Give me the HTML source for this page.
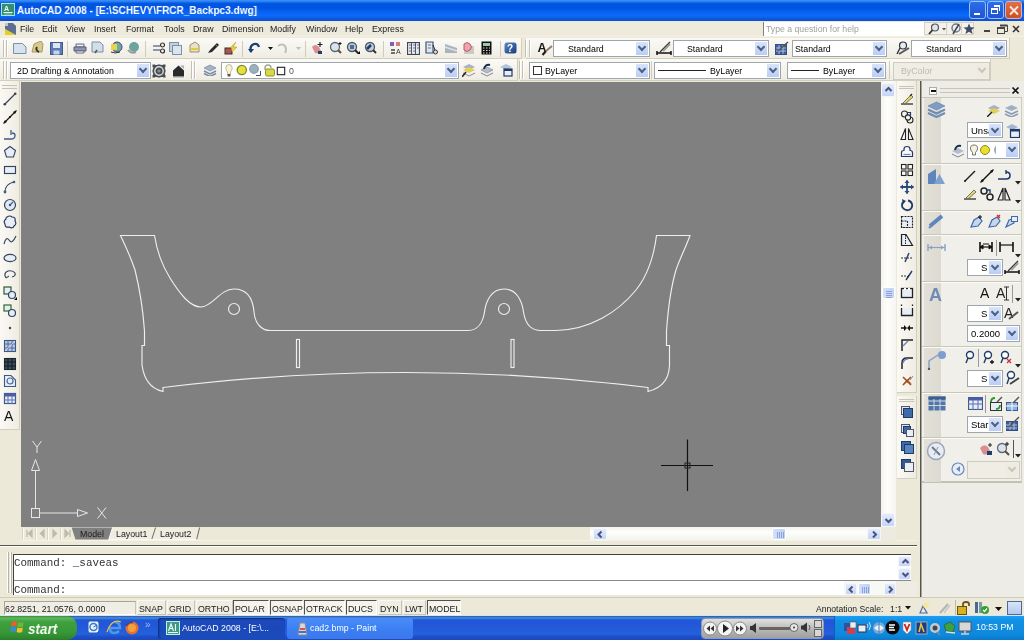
<!DOCTYPE html>
<html><head><meta charset="utf-8"><style>
*{margin:0;padding:0;box-sizing:border-box}
html,body{width:1024px;height:640px;overflow:hidden;background:#ECE9D8;font-family:"Liberation Sans",sans-serif;font-size:9px;color:#1A1A1A}
body{position:relative}
div,span,svg{position:absolute}
svg{will-change:transform}
.t{white-space:nowrap;line-height:1;will-change:transform}
.cb{background:#fff;border:1px solid #9DA5AD}
.dd{position:absolute;top:1px;bottom:1px;right:1px;width:12px;background:linear-gradient(#D9E4FB,#BACDF5)}
.dd:after{content:"";position:absolute;left:3px;top:2px;width:4px;height:4px;border-right:2px solid #4D6185;border-bottom:2px solid #4D6185;transform:rotate(45deg)}
.ddx:after{border-color:#C8C6BC}
.tb{background:linear-gradient(#FAF9F4,#EEEBE0);}
.mi{font-size:9.5px;top:24px}
</style></head><body>
<div style="left:0px;top:0px;width:1024px;height:21px;background:linear-gradient(#3D95FC 0px,#2A7CF2 1.5px,#0058DE 3.5px,#0053E2 8px,#0862F4 12px,#0A6AFA 16px,#085EE8 18px,#1A4EBC 20px,#1A4EBC 21px)"></div>
<svg style="left:1px;top:3px;" width="14" height="13" viewBox="0 0 14 13"><rect x="0.5" y="0.5" width="13" height="12" fill="#3A8C6E" stroke="#9EE8DC"/><text x="3" y="8" font-size="7" fill="#E8FFF8" font-family="Liberation Sans" font-weight="bold">A</text><path d="M2.5 9.5H11.5" stroke="#E8FFF8"/><rect x="3" y="10.5" width="8" height="1" fill="#7AC8B0"/></svg>
<div class="t" style="left:17px;top:5px;font-size:11px;transform:scaleX(0.913);transform-origin:0 0;font-weight:bold;color:#fff">AutoCAD 2008 - [E:\SCHEVY\FRCR_Backpc3.dwg]</div>
<div style="left:969px;top:1px;width:17px;height:18px;border:1px solid #9CC0FA;border-radius:3px;background:linear-gradient(#2E6CEA,#1E54D4)"><div style="left:4px;top:11px;width:6px;height:2px;background:#fff"></div></div>
<div style="left:987px;top:1px;width:17px;height:18px;border:1px solid #9CC0FA;border-radius:3px;background:linear-gradient(#2E6CEA,#1E54D4)"><div style="left:3px;top:6px;width:7px;height:6px;border:1px solid #fff;border-top-width:2px"></div><div style="left:6px;top:3px;width:6px;height:6px;border-top:2px solid #fff;border-right:1px solid #fff"></div></div>
<div style="left:1005px;top:1px;width:17px;height:18px;border:1px solid #E0B0B8;border-radius:3px;background:linear-gradient(#E07048,#CC5028)"><svg style="left:3px;top:3px" width="10" height="11"><path d="M1 1.5L9 9.5M9 1.5L1 9.5" stroke="#FCE8E0" stroke-width="1.8"/></svg></div>
<div style="left:0px;top:21px;width:1024px;height:17px;background:linear-gradient(#EEEBDD,#EDEADC 80%,#F6F4EA)"></div>
<div style="left:0px;top:21px;width:1024px;height:1px;background:#DCEBF8"></div>
<svg style="left:4px;top:22px;" width="13" height="14" viewBox="0 0 13 14"><path d="M1 7L12 13H1Z" fill="#E9CF1C"/><path d="M1 1H9L12 4V13L1 7Z" fill="#5C6E92"/><path d="M1 1h3v3h-3z" fill="#fff" opacity=".6"/></svg>
<div class="t" style="left:20px;top:25px;font-size:8.8px;">File</div>
<div class="t" style="left:42px;top:25px;font-size:8.8px;">Edit</div>
<div class="t" style="left:66px;top:25px;font-size:8.8px;">View</div>
<div class="t" style="left:94px;top:25px;font-size:8.8px;">Insert</div>
<div class="t" style="left:126px;top:25px;font-size:8.8px;">Format</div>
<div class="t" style="left:164px;top:25px;font-size:8.8px;">Tools</div>
<div class="t" style="left:193px;top:25px;font-size:8.8px;">Draw</div>
<div class="t" style="left:222px;top:25px;font-size:8.8px;">Dimension</div>
<div class="t" style="left:270px;top:25px;font-size:8.8px;">Modify</div>
<div class="t" style="left:306px;top:25px;font-size:8.8px;">Window</div>
<div class="t" style="left:345px;top:25px;font-size:8.8px;">Help</div>
<div class="t" style="left:372px;top:25px;font-size:8.8px;">Express</div>
<div style="left:763px;top:22px;width:162px;height:14px;background:#fff;border-left:1px solid #808080"></div>
<div class="t" style="left:766px;top:25px;font-size:8.7px;color:#A0A0A0">Type a question for help</div>
<div style="left:924px;top:22px;width:50px;height:13px;background:#F3F1E9;border:1px solid #D4D0C4"></div>
<div style="left:946px;top:23px;width:1px;height:11px;background:#D4D0C4"></div>
<div style="left:961px;top:23px;width:1px;height:11px;background:#D4D0C4"></div>
<svg style="left:927px;top:23px;" width="14" height="12" viewBox="0 0 14 12"><circle cx="8" cy="4.5" r="3.5" fill="#DDE6F0" stroke="#555" stroke-width="1.2"/><path d="M5.5 7L2 11" stroke="#333" stroke-width="1.8"/></svg>
<svg style="left:942px;top:28px;" width="5" height="3" viewBox="0 0 5 3"><path d="M0 0H4L2 2.5Z" fill="#555"/></svg>
<svg style="left:950px;top:23px;" width="12" height="12" viewBox="0 0 12 12"><circle cx="6" cy="5" r="4" fill="none" stroke="#6D7A8C" stroke-width="1.5"/><path d="M3 11L9 1" stroke="#445" stroke-width="1.5"/></svg>
<svg style="left:963px;top:23px;" width="12" height="12" viewBox="0 0 12 12"><path d="M6 0.5L7.6 4.3L11.5 4.5L8.5 7L9.6 11L6 8.7L2.4 11L3.5 7L0.5 4.5L4.4 4.3Z" fill="#3E4C68"/></svg>
<div style="left:984px;top:30px;width:6px;height:2px;background:#444"></div>
<svg style="left:997px;top:24px;" width="11" height="10" viewBox="0 0 11 10"><rect x="0.5" y="3.5" width="7" height="6" fill="none" stroke="#444"/><path d="M0.5 4H7.5" stroke="#444" stroke-width="2"/><path d="M3 1.5H10.5V7.5H8" fill="none" stroke="#444"/><path d="M3 1.5H10.5" stroke="#444" stroke-width="2"/></svg>
<svg style="left:1012px;top:25px;" width="8" height="8" viewBox="0 0 8 8"><path d="M1 1L7 7M7 1L1 7" stroke="#333" stroke-width="1.6"/></svg>
<div style="left:0px;top:37px;width:1024px;height:44px;background:#ECE9D8"></div>
<div style="left:0px;top:38px;width:1010px;height:21px;background:linear-gradient(#FBFAF6,#EFECE2);border-bottom:1px solid #D2CEC0;border-right:1px solid #D2CEC0"></div>
<div style="left:0px;top:59px;width:991px;height:22px;background:linear-gradient(#FBFAF6,#EFECE2);border-bottom:1px solid #D2CEC0;border-right:1px solid #D2CEC0"></div>
<div style="left:21px;top:82px;width:860px;height:445px;background:#808080"></div>
<div style="left:3px;top:40px;width:2px;height:17px;border-left:1px solid #C5C1B0;border-right:1px solid #fff"></div>
<div style="left:6px;top:40px;width:2px;height:17px;border-left:1px solid #C5C1B0;border-right:1px solid #fff"></div>
<svg style="left:13px;top:42px;" width="14" height="12" viewBox="0 0 14 12"><path d="M0.5 1.5H9.5L13 5V11.5H0.5Z" fill="#D6E3EE" stroke="#7C8FA3"/></svg>
<svg style="left:31px;top:41px;" width="14" height="13" viewBox="0 0 14 13"><path d="M1 11L3 3L10 0L12 3L11 11Z" fill="#D9C98C" stroke="#A89A5E"/><path d="M6 6Q4 9 8 11" stroke="#333" stroke-width="2" fill="none"/></svg>
<svg style="left:50px;top:42px;" width="13" height="13" viewBox="0 0 13 13"><rect x="0.5" y="0.5" width="12" height="12" fill="#5B7BB5" stroke="#3E5A90"/><rect x="3" y="1" width="7" height="5" fill="#DDE6F4"/><rect x="3.5" y="8.5" width="6" height="4" fill="#C8D4EA"/></svg>
<div style="left:67px;top:41px;width:1px;height:16px;background:#D0CCBC"></div>
<svg style="left:73px;top:41px;" width="14" height="13" viewBox="0 0 14 13"><path d="M3 3H11V6H3Z" fill="#EDEFF6" stroke="#667"/><path d="M1 6H13V10H1Z" fill="#8E96B8" stroke="#555A7A"/><path d="M3 10H11V12H3Z" fill="#fff" stroke="#667"/></svg>
<svg style="left:91px;top:41px;" width="13" height="14" viewBox="0 0 13 14"><path d="M1 1H9L12 4V11H1Z" fill="#D2DEEA" stroke="#7E8EA2"/><path d="M4 12L6 9" stroke="#555" stroke-width="1.5"/></svg>
<svg style="left:109px;top:41px;" width="14" height="14" viewBox="0 0 14 14"><circle cx="8" cy="6" r="5" fill="#6FA8A8" stroke="#446"/><rect x="2" y="3" width="6" height="6" fill="#E8D44A"/><path d="M2 11Q6 13 11 11" stroke="#333" fill="none"/></svg>
<svg style="left:127px;top:41px;" width="13" height="13" viewBox="0 0 13 13"><circle cx="7" cy="6" r="5" fill="#6BA59E"/><path d="M1 9Q4 13 9 11" stroke="#999" stroke-width="2" fill="none"/></svg>
<div style="left:145px;top:41px;width:1px;height:16px;background:#D0CCBC"></div>
<svg style="left:152px;top:42px;" width="14" height="12" viewBox="0 0 14 12"><path d="M1 4H8" stroke="#6C7896" stroke-width="1.5"/><path d="M1 8H8" stroke="#6C7896" stroke-width="1.5"/><circle cx="10.5" cy="3" r="2" fill="none" stroke="#333" stroke-width="1.2"/><circle cx="10.5" cy="9" r="2" fill="none" stroke="#333" stroke-width="1.2"/></svg>
<svg style="left:169px;top:42px;" width="14" height="13" viewBox="0 0 14 13"><rect x="0.5" y="0.5" width="9" height="9" fill="#C2D0E0" stroke="#7E90A6"/><rect x="3.5" y="3.5" width="9" height="9" fill="#DAE4EF" stroke="#7E90A6"/></svg>
<svg style="left:188px;top:41px;" width="13" height="14" viewBox="0 0 13 14"><path d="M2 4L7 1L11 4V11H2Z" fill="#E8E2C8" stroke="#9A9068"/><path d="M3 8H10" stroke="#E0CC40" stroke-width="2"/></svg>
<svg style="left:207px;top:42px;" width="13" height="12" viewBox="0 0 13 12"><path d="M1 11L3 8L10 1L12 3L5 10Z" fill="#2A2A2A"/><path d="M8 2L11 5" stroke="#888"/></svg>
<svg style="left:224px;top:41px;" width="14" height="14" viewBox="0 0 14 14"><rect x="1" y="7" width="7" height="6" fill="#B45050" stroke="#333"/><path d="M7 6L12 1L9 6H13L8 11" fill="#E8D030" stroke="#C0A020" stroke-width="0.6"/></svg>
<div style="left:242px;top:41px;width:1px;height:16px;background:#D0CCBC"></div>
<svg style="left:248px;top:42px;" width="12" height="12" viewBox="0 0 12 12"><path d="M3 10Q1 4 6 2Q10 1 11 5" stroke="#1C3C7C" stroke-width="2.2" fill="none"/><path d="M0 7L3 11L6 7Z" fill="#1C3C7C"/></svg>
<svg style="left:268px;top:47px;" width="5" height="3" viewBox="0 0 5 3"><path d="M0 0H5L2.5 3Z" fill="#111"/></svg>
<svg style="left:276px;top:42px;" width="12" height="13" viewBox="0 0 12 13"><path d="M2 4Q6 1 9 4Q11 8 9 11" stroke="#BFBFBF" stroke-width="2" fill="none"/></svg>
<svg style="left:296px;top:47px;" width="5" height="3" viewBox="0 0 5 3"><path d="M0 0H5L2.5 3Z" fill="#BDBDBD"/></svg>
<div style="left:305px;top:41px;width:1px;height:16px;background:#D0CCBC"></div>
<svg style="left:310px;top:41px;" width="14" height="14" viewBox="0 0 14 14"><path d="M2 6Q5 2 9 6L11 10Q9 13 5 12Z" fill="#D88F8F"/><rect x="8" y="10" width="4" height="3" fill="#1F3F6A"/><path d="M10 1V6M7.5 3.5H12.5" stroke="#222" stroke-width="1.2"/></svg>
<svg style="left:329px;top:41px;" width="14" height="14" viewBox="0 0 14 14"><circle cx="6" cy="6" r="4.5" fill="#DDE3EA" stroke="#5C6A78" stroke-width="1.3"/><path d="M9 9L12 12" stroke="#5A4A3A" stroke-width="2"/><path d="M11 1V4M9.5 2.5H12.5" stroke="#111"/></svg>
<svg style="left:346px;top:41px;" width="14" height="14" viewBox="0 0 14 14"><circle cx="6" cy="6" r="4.5" fill="#C4CCD8" stroke="#4C5A68" stroke-width="1.3"/><rect x="4" y="4" width="4" height="4" fill="#4A6A9A"/><path d="M9 9L12 12" stroke="#222" stroke-width="2"/><path d="M11 13L14 13L14 10Z" fill="#000"/></svg>
<svg style="left:364px;top:41px;" width="14" height="14" viewBox="0 0 14 14"><circle cx="6" cy="6" r="4.5" fill="#C4CCD8" stroke="#4C5A68" stroke-width="1.3"/><path d="M3 8L7 4" stroke="#1E3A6E" stroke-width="2.5"/><path d="M9 9L12 12" stroke="#333" stroke-width="2"/></svg>
<div style="left:383px;top:41px;width:1px;height:16px;background:#D0CCBC"></div>
<svg style="left:389px;top:41px;" width="14" height="14" viewBox="0 0 14 14"><rect x="1" y="1" width="4" height="4" fill="#8060B0"/><rect x="7" y="1" width="4" height="4" fill="#D08080"/><path d="M2 9H6M2 12H6" stroke="#444" stroke-width="1.4"/><text x="7" y="13" font-size="7" fill="#333" font-family="Liberation Sans">A</text></svg>
<svg style="left:407px;top:42px;" width="13" height="13" viewBox="0 0 13 13"><rect x="0.5" y="0.5" width="12" height="12" fill="#E4EAF0" stroke="#3C4A58" stroke-width="1.2"/><path d="M4.5 1V12M8.5 1V12" stroke="#556"/><path d="M2 3H4M6 3H8M10 3H12M2 6H4M6 6H8M10 6H12M2 9H4M6 9H8" stroke="#556" stroke-width="0.8"/></svg>
<svg style="left:425px;top:41px;" width="13" height="14" viewBox="0 0 13 14"><path d="M1 1H8V12H1Z" fill="#DDE5EE" stroke="#3C5478" stroke-width="1.2"/><path d="M3 4H6M3 7H6" stroke="#778"/><circle cx="10.5" cy="11" r="2" fill="#ddd" stroke="#333"/><path d="M8 4L10 9" stroke="#222"/></svg>
<svg style="left:444px;top:42px;" width="14" height="12" viewBox="0 0 14 12"><path d="M1 2L13 6V11H1Z" fill="#A9B4BA"/><path d="M1 5L13 9" stroke="#DDE" stroke-width="1.5"/></svg>
<svg style="left:462px;top:41px;" width="13" height="14" viewBox="0 0 13 14"><rect x="2" y="5" width="10" height="8" fill="#C9C9C9"/><path d="M2 3Q5 0 8 3Q11 6 8 9Q5 12 2 9Z" fill="#E6A6B4" stroke="#C55"/></svg>
<svg style="left:481px;top:41px;" width="11" height="14" viewBox="0 0 11 14"><rect x="0.5" y="0.5" width="10" height="13" fill="#111" /><rect x="2" y="2" width="7" height="3" fill="#9CA"/><path d="M2 7H3.5M5 7H6.5M8 7H9M2 9.5H3.5M5 9.5H6.5M8 9.5H9M2 12H3.5M5 12H6.5M8 12H9" stroke="#ddd"/></svg>
<div style="left:500px;top:41px;width:1px;height:16px;background:#D0CCBC"></div>
<svg style="left:504px;top:42px;" width="13" height="12" viewBox="0 0 13 12"><defs><linearGradient id="hq" x1="0" y1="0" x2="1" y2="1"><stop offset="0" stop-color="#5A8AC8"/><stop offset="1" stop-color="#1A3A78"/></linearGradient></defs><rect x="0.5" y="0.5" width="12" height="11" rx="2.5" fill="url(#hq)"/><text x="3" y="10" font-size="10" font-weight="bold" fill="#fff" font-family="Liberation Sans">?</text></svg>
<div style="left:521px;top:38px;width:5px;height:21px;background:#ECE9D8;border-left:1px solid #D2CEC0"></div>
<div style="left:525px;top:40px;width:2px;height:17px;border-left:1px solid #C5C1B0;border-right:1px solid #fff"></div>
<div style="left:529px;top:40px;width:2px;height:17px;border-left:1px solid #C5C1B0;border-right:1px solid #fff"></div>
<svg style="left:537px;top:41px;" width="16" height="15" viewBox="0 0 16 15"><text x="0.5" y="11" font-size="12.5" font-weight="bold" font-family="Liberation Sans" fill="#1A1A1A">A</text><path d="M5.5 14L9 10" stroke="#222" stroke-width="2.2"/><path d="M9 10L15 5" stroke="#8A8260" stroke-width="2"/></svg>
<div style="left:553px;top:40px;width:97px;height:17px;background:#fff;border:1px solid #9DA5AD"><div class="t" style="left:14px;top:4.0px;font-size:8.8px;color:#000">Standard</div><div class="dd" style="width:12px;"></div></div>
<svg style="left:656px;top:41px;" width="16" height="14" viewBox="0 0 16 14"><path d="M1 12H15" stroke="#111" stroke-width="1.5"/><path d="M1 10V14M15 10V14" stroke="#111" stroke-width="1.5"/><path d="M4 11L14 1" stroke="#333" stroke-width="1.2"/><path d="M7 10L14 3" stroke="#999" stroke-width="2"/></svg>
<div style="left:673px;top:40px;width:96px;height:17px;background:#fff;border:1px solid #9DA5AD"><div class="t" style="left:13px;top:4.0px;font-size:8.8px;color:#000">Standard</div><div class="dd" style="width:12px;"></div></div>
<svg style="left:775px;top:41px;" width="14" height="14" viewBox="0 0 14 14"><rect x="0.5" y="3.5" width="11" height="10" fill="#3E5EA0" stroke="#34507F"/><path d="M1 7H11M1 10H11M4 4V13M8 4V13" stroke="#C8D3EA" stroke-width="0.8"/><path d="M3 10L13 1" stroke="#555" stroke-width="1.5"/></svg>
<div style="left:792px;top:40px;width:95px;height:17px;background:#fff;border:1px solid #9DA5AD"><div class="t" style="left:2px;top:4.0px;font-size:8.8px;color:#000">Standard</div><div class="dd" style="width:12px;"></div></div>
<svg style="left:895px;top:41px;" width="15" height="15" viewBox="0 0 15 15"><circle cx="8" cy="4.5" r="3.5" fill="#E4ECF4" stroke="#333" stroke-width="1.2"/><path d="M5 7L2 13" stroke="#333" stroke-width="1.4"/><path d="M4 13L14 7" stroke="#556" stroke-width="2"/></svg>
<div style="left:911px;top:40px;width:96px;height:17px;background:#fff;border:1px solid #9DA5AD"><div class="t" style="left:14px;top:4.0px;font-size:8.8px;color:#000">Standard</div><div class="dd" style="width:12px;"></div></div>
<div style="left:3px;top:61px;width:2px;height:18px;border-left:1px solid #C5C1B0;border-right:1px solid #fff"></div>
<div style="left:6px;top:61px;width:2px;height:18px;border-left:1px solid #C5C1B0;border-right:1px solid #fff"></div>
<div style="left:10px;top:62px;width:141px;height:17px;background:#fff;border:1px solid #9DA5AD"><div class="t" style="left:6px;top:4.0px;font-size:8.8px;color:#000">2D Drafting &amp; Annotation</div><div class="dd" style="width:12px;"></div></div>
<svg style="left:152px;top:64px;" width="14" height="14" viewBox="0 0 14 14"><rect x="0.5" y="0.5" width="13" height="13" fill="#4A4E52"/><circle cx="7" cy="7" r="4.2" fill="none" stroke="#D8DADC" stroke-width="1.4"/><circle cx="7" cy="7" r="1.6" fill="#8A8E92"/><path d="M3 0.5H5.5M8.5 0.5H11M0.5 3V5.5M0.5 8.5V11M13.5 3V5.5M13.5 8.5V11M3 13.5H5.5M8.5 13.5H11" stroke="#E8EAEC" stroke-width="1.2"/></svg>
<svg style="left:172px;top:64px;" width="13" height="14" viewBox="0 0 13 14"><rect x="0" y="0" width="13" height="14" fill="#F4F4F2"/><path d="M1 6.5L6.5 1.5L12 6.5V12.5H1Z" fill="#2A2A2A"/><path d="M8 1.5L12 1.5L12 5" fill="#B0B0B0"/><path d="M1 13.5H12" stroke="#C8C8C8"/></svg>
<div style="left:191px;top:61px;width:2px;height:18px;border-left:1px solid #C5C1B0;border-right:1px solid #fff"></div>
<div style="left:194px;top:61px;width:2px;height:18px;border-left:1px solid #C5C1B0;border-right:1px solid #fff"></div>
<svg style="left:203px;top:64px;" width="14" height="12" viewBox="0 0 14 12"><path d="M1 4L7 1L13 4L7 7Z" fill="#A4B4CC" stroke="#6A7A94" stroke-width="0.6"/><path d="M1 7L7 10L13 7" stroke="#7A8AA4" stroke-width="1.5" fill="none"/><path d="M1 9.5L7 12.5L13 9.5" stroke="#7A8AA4" stroke-width="1.5" fill="none"/></svg>
<div style="left:221px;top:62px;width:238px;height:17px;background:#fff;border:1px solid #9DA5AD"><div class="dd" style="width:12px"></div></div>
<svg style="left:225px;top:63px;" width="62" height="14" viewBox="0 0 62 14"><path d="M4 1.5Q0.5 1.5 0.8 5.5Q1.2 7.5 2.6 9V11.5H5.4V9Q6.8 7.5 7.2 5.5Q7.5 1.5 4 1.5Z" fill="#F6F4D0" stroke="#B8B48A" stroke-width="0.9"/><rect x="2.6" y="11" width="2.8" height="2.5" fill="#555"/><circle cx="16.8" cy="7" r="4.6" fill="#E4E040" stroke="#7E8A2A" stroke-width="1.3"/><circle cx="29" cy="6" r="4.3" fill="#9AB0BC" stroke="#8AA0AC" stroke-width="1.2"/><path d="M31 12.5H35.5V8" stroke="#2A3A5A" stroke-width="0.9" fill="none"/><path d="M40 7V5Q40 2 43 2Q46 2 46 5" stroke="#A0A890" stroke-width="1.5" fill="none"/><rect x="40.5" y="6" width="9" height="7" rx="1.5" fill="#D8D840" stroke="#8A9030" stroke-width="1"/><rect x="52.3" y="4.3" width="7.4" height="7.4" fill="#fff" stroke="#222" stroke-width="1.1"/></svg>
<div class="t" style="left:289px;top:67px;font-size:8.8px;color:#555">0</div>
<svg style="left:462px;top:63px;" width="14" height="14" viewBox="0 0 14 14"><path d="M1 4L7 1L13 4L7 7Z" fill="#A8B0C8"/><path d="M1 7L7 10L13 7L7 4Z" fill="#E0D058"/><path d="M1 10L7 13L13 10" stroke="#88A" fill="none"/><path d="M0 14L4 9" stroke="#222" stroke-width="1.5"/></svg>
<svg style="left:480px;top:63px;" width="14" height="14" viewBox="0 0 14 14"><path d="M1 7L7 4L13 7L7 10Z" fill="#B4BCCC" stroke="#7A8294" stroke-width="0.6"/><path d="M1 10L7 13L13 10" stroke="#7A8294" fill="none"/><path d="M4 6Q5 1 10 2" stroke="#1C2C4C" stroke-width="2" fill="none"/></svg>
<svg style="left:499px;top:63px;" width="14" height="14" viewBox="0 0 14 14"><path d="M1 4L7 1L13 4L7 7Z" fill="#B4C4DC"/><rect x="5" y="6" width="8" height="7" fill="#E8EEF6" stroke="#1E3A6A" stroke-width="1.2"/><rect x="5" y="6" width="8" height="2" fill="#1E3A6A"/></svg>
<div style="left:517px;top:59px;width:3px;height:22px;background:#ECE9D8;border-left:1px solid #D2CEC0"></div>
<div style="left:519px;top:61px;width:2px;height:18px;border-left:1px solid #C5C1B0;border-right:1px solid #fff"></div>
<div style="left:522px;top:61px;width:2px;height:18px;border-left:1px solid #C5C1B0;border-right:1px solid #fff"></div>
<div style="left:529px;top:62px;width:121px;height:17px;background:#fff;border:1px solid #9DA5AD"><div class="t" style="left:15px;top:4.0px;font-size:8.8px;color:#000">ByLayer</div><div class="dd" style="width:12px;"></div></div>
<svg style="left:533px;top:66px;" width="9" height="9" viewBox="0 0 9 9"><rect x="0.5" y="0.5" width="8" height="8" fill="#fff" stroke="#333"/></svg>
<div style="left:651px;top:61px;width:1px;height:18px;background:#D0CCBC"></div>
<div style="left:654px;top:62px;width:127px;height:17px;background:#fff;border:1px solid #9DA5AD"><div class="t" style="left:55px;top:4.0px;font-size:8.8px;color:#000">ByLayer</div><div class="dd" style="width:12px;"></div></div>
<div style="left:658px;top:70px;width:48px;height:1px;background:#222"></div>
<div style="left:787px;top:62px;width:99px;height:17px;background:#fff;border:1px solid #9DA5AD"><div class="t" style="left:35px;top:4.0px;font-size:8.8px;color:#000">ByLayer</div><div class="dd" style="width:12px;"></div></div>
<div style="left:791px;top:70px;width:28px;height:1px;background:#222"></div>
<div style="left:889px;top:61px;width:1px;height:18px;background:#D0CCBC"></div>
<div style="left:893px;top:62px;width:97px;height:18px;background:#F0EEE4;border:1px solid #CFCBBD"><div class="t" style="left:7px;top:4.0px;font-size:8.8px;color:#BCB9AE">ByColor</div><div class="dd ddx" style="width:12px;background:#EEEBE0;"></div></div>
<div style="left:0px;top:81px;width:20px;height:349px;background:linear-gradient(90deg,#FAF9F4,#EFECE2);border-right:1px solid #D2CEC0;border-bottom:1px solid #D2CEC0"></div>
<div style="left:2px;top:85px;width:15px;height:4px;border-top:1px solid #C8C4B4;border-bottom:1px solid #C8C4B4"></div>
<svg style="left:3px;top:92px;" width="14" height="14" viewBox="0 0 14 14"><path d="M1.5 12.5L12.5 1.5" stroke="#3A4450" stroke-width="1.15"/><circle cx="1.8" cy="12.2" r="1.3" fill="#3A4450"/><circle cx="12.2" cy="1.8" r="1.3" fill="#3A4450"/></svg>
<svg style="left:3px;top:110px;" width="14" height="14" viewBox="0 0 14 14"><path d="M1 13L13 1" stroke="#1A1A1A" stroke-width="1.15"/><path d="M0 14L4 12L2 10Z M14 0L10 2L12 4Z" fill="#111"/><circle cx="7" cy="7" r="1" fill="#111"/></svg>
<svg style="left:3px;top:128px;" width="14" height="14" viewBox="0 0 14 14"><path d="M1 11H8Q12 11 12 7.5Q12 5 9 5" stroke="#3A5A8A" stroke-width="1.3" fill="none"/><path d="M8 2V7" stroke="#3A5A8A" stroke-width="1.3"/></svg>
<svg style="left:3px;top:145px;" width="14" height="14" viewBox="0 0 14 14"><path d="M7 1.5L12.5 5.5L10.5 12H3.5L1.5 5.5Z" fill="#E6EDF6" stroke="#34445E" stroke-width="1.1"/></svg>
<svg style="left:3px;top:163px;" width="14" height="14" viewBox="0 0 14 14"><rect x="1.5" y="3.5" width="11" height="7" fill="#E8EEF6" stroke="#34445E" stroke-width="1.15"/></svg>
<svg style="left:3px;top:180px;" width="14" height="14" viewBox="0 0 14 14"><path d="M2 12Q2 4 11 2" stroke="#34445E" stroke-width="1.15" fill="none"/><circle cx="2" cy="12" r="1.4" fill="#3A5A8A"/><circle cx="11" cy="2" r="1.3" fill="#3A5A8A"/></svg>
<svg style="left:3px;top:198px;" width="14" height="14" viewBox="0 0 14 14"><circle cx="7" cy="7" r="5.5" fill="#E0E8F2" stroke="#34445E" stroke-width="1.2"/><path d="M7 7L10 4" stroke="#3A5A8A" stroke-width="1.1"/><circle cx="7" cy="7" r="1.2" fill="#3A5A8A"/></svg>
<svg style="left:3px;top:215px;" width="14" height="14" viewBox="0 0 14 14"><path d="M4 2Q7 0 9 2Q13 2 12 6Q14 9 11 11Q10 14 6 12Q2 13 2 9Q0 6 3 4Q3 2 4 2Z" fill="#E8EEF6" stroke="#2A3A5A" stroke-width="1.2"/></svg>
<svg style="left:3px;top:233px;" width="14" height="14" viewBox="0 0 14 14"><path d="M1 11Q3 3 6 7Q9 12 13 3" stroke="#34445E" stroke-width="1.15" fill="none"/></svg>
<svg style="left:3px;top:251px;" width="14" height="14" viewBox="0 0 14 14"><ellipse cx="7" cy="7" rx="6" ry="3.6" fill="#E6EDF6" stroke="#34445E" stroke-width="1.2"/></svg>
<svg style="left:3px;top:268px;" width="14" height="14" viewBox="0 0 14 14"><path d="M3 10Q0 5 5 3Q10 2 12 5Q13 8 9 9" stroke="#34445E" stroke-width="1.2" fill="none"/><path d="M3 10L6 8" stroke="#3A5A8A" stroke-width="1.1"/></svg>
<svg style="left:3px;top:286px;" width="14" height="14" viewBox="0 0 14 14"><rect x="1" y="1" width="7" height="7" fill="#E6EDF6" stroke="#2F5A2F" stroke-width="1.2"/><circle cx="9" cy="9" r="3.5" fill="#E6EDF6" stroke="#34445E" stroke-width="1.2"/><path d="M11 14L14 14L14 11Z" fill="#000"/></svg>
<svg style="left:3px;top:304px;" width="14" height="14" viewBox="0 0 14 14"><rect x="1" y="1" width="7" height="6" fill="#E6EDF6" stroke="#2F6A2F" stroke-width="1.2"/><circle cx="9" cy="9" r="3.5" fill="#E6EDF6" stroke="#34445E" stroke-width="1.2"/></svg>
<svg style="left:3px;top:321px;" width="14" height="14" viewBox="0 0 14 14"><circle cx="7" cy="7" r="1.2" fill="#34445E"/></svg>
<svg style="left:3px;top:339px;" width="14" height="14" viewBox="0 0 14 14"><rect x="1.5" y="1.5" width="11" height="11" fill="#B8C8E0" stroke="#3A5A8A" stroke-width="1.1"/><path d="M1 5H13M1 9H13M5 1V13M9 1V13" stroke="#3E5A8A" stroke-width="0.8"/><path d="M2 12L12 2" stroke="#ECF" stroke-width="0.8"/></svg>
<svg style="left:3px;top:357px;" width="14" height="14" viewBox="0 0 14 14"><rect x="1.5" y="1.5" width="11" height="11" fill="#3A4A5A" stroke="#1A2A3A" stroke-width="1.1"/><path d="M1 5H13M1 9H13M5 1V13M9 1V13" stroke="#111" stroke-width="0.8"/></svg>
<svg style="left:3px;top:374px;" width="14" height="14" viewBox="0 0 14 14"><path d="M1.5 1.5H8L12.5 6V12.5H1.5Z" fill="#E6EDF6" stroke="#3A5A8A" stroke-width="1.1"/><circle cx="7" cy="7" r="3" fill="none" stroke="#4A6A9A" stroke-width="1.2"/></svg>
<svg style="left:3px;top:392px;" width="14" height="14" viewBox="0 0 14 14"><rect x="1.5" y="1.5" width="11" height="10" fill="#E8EEF8" stroke="#3E5A8A" stroke-width="1.2"/><rect x="1.5" y="1.5" width="11" height="3" fill="#4A5EA8"/><path d="M1 8H13M5 4V12M9 4V12" stroke="#5A6EB0" stroke-width="1"/></svg>
<svg style="left:3px;top:408px;" width="16" height="16" viewBox="0 0 16 16"><text x="1" y="13" font-size="14" font-family="Liberation Sans" fill="#111">A</text></svg>
<svg style="left:0px;top:0px;pointer-events:none" width="1024" height="640" viewBox="0 0 1024 640"><path d="M120.5 235.5H154.5C156 245 160 262 170 278C180 294 190 307 201 307C212 307 220 289 234 289C248 289 253 300 254 312C255 324 262 330.5 270 330.5H468C478 330.5 483 322 484.5 312C486 300 492 289 504 289C516 289 522 300 523.5 312C525 322 530 330.5 541 330.5H556C590 330 618 312 636 290C648 275 654 255 656.5 235.5H690C686 247 680 258 676 270C670 290 668 310 666.5 331V345.5H669.5V365.5C669 380 662 388 648 391.5V387.5Q405.5 357.5 163 387.5V391.5C152 389 144 380 142 365V345.5H144.5V331C143 310 140 290 135 270C131 258 126 247 120.5 235.5Z" fill="none" stroke="#EEEEEE" stroke-width="1.15"/><circle cx="234" cy="309" r="5.5" fill="none" stroke="#EEEEEE" stroke-width="1.15"/><circle cx="504" cy="309" r="5.5" fill="none" stroke="#EEEEEE" stroke-width="1.15"/><rect x="296.5" y="339.5" width="3" height="28" fill="none" stroke="#EEEEEE" stroke-width="1.15"/><rect x="511" y="339.5" width="3" height="28" fill="none" stroke="#EEEEEE" stroke-width="1.15"/><rect x="31.5" y="508.5" width="8" height="9" fill="none" stroke="#E6E6E6"/><path d="M35.5 508.5V470.5M39.5 513H77.5" stroke="#E6E6E6" fill="none"/><path d="M31.5 470.5L35.5 459.5L39.5 470.5Z M77.5 509.5L87.5 513L77.5 516.5Z" fill="none" stroke="#E6E6E6"/><path d="M32.5 441L37 447V453M41.5 441L37 447" stroke="#E6E6E6" fill="none"/><path d="M97.5 507.5L106 518.5M106 507.5L97.5 518.5" stroke="#E6E6E6" fill="none"/><path d="M661 465.5H713M687.5 439.5V491" stroke="#111" stroke-width="1.2"/><rect x="685" y="463" width="5" height="5" fill="none" stroke="#222"/></svg>
<div style="left:881px;top:81px;width:15px;height:446px;background:linear-gradient(90deg,#F4F3EE,#FEFEFB 40%,#F6F5F0)"></div>
<div style="left:881px;top:83px;width:14px;height:14px;background:linear-gradient(#E4EBFC,#C6D4F6);border:1px solid #F4F6FC;border-radius:2px;"><svg style="left:1px;top:1px" width="11" height="11"><path d="M2.5 6L5.5 3L8.5 6" stroke="#45557E" stroke-width="2" fill="none"/></svg></div>
<div style="left:881px;top:513px;width:14px;height:14px;background:linear-gradient(#E4EBFC,#C6D4F6);border:1px solid #F4F6FC;border-radius:2px;"><svg style="left:1px;top:1px" width="11" height="11"><path d="M2.5 4L5.5 7L8.5 4" stroke="#45557E" stroke-width="2" fill="none"/></svg></div>
<div style="left:882px;top:287px;width:13px;height:12px;background:linear-gradient(90deg,#D4E0FA,#C0D2F6);border:1px solid #fff;border-radius:2px"><div style="left:3px;top:3px;width:6px;height:1px;background:#8CA4D8"></div><div style="left:3px;top:5px;width:6px;height:1px;background:#8CA4D8"></div><div style="left:3px;top:7px;width:6px;height:1px;background:#8CA4D8"></div><div style="left:3px;top:9px;width:6px;height:1px;background:#8CA4D8"></div></div>
<div style="left:896px;top:81px;width:25px;height:465px;background:#ECE9D8"></div>
<div style="left:897px;top:81px;width:20px;height:312px;background:linear-gradient(90deg,#FAF9F4,#EFECE2);border-right:1px solid #D2CEC0;border-bottom:1px solid #D2CEC0"></div>
<div style="left:899px;top:86px;width:15px;height:3px;border-top:1px solid #C8C4B4;border-bottom:1px solid #C8C4B4"></div>
<svg style="left:900px;top:92px;" width="14" height="14" viewBox="0 0 14 14"><path d="M1 12H13" stroke="#222" stroke-width="1.2"/><path d="M3 11L11 3L13 5L5 12Z" fill="#E8D86A" stroke="#555" stroke-width="0.8"/><path d="M10 4L12 2" stroke="#333" stroke-width="1.5"/></svg>
<svg style="left:900px;top:110px;" width="14" height="14" viewBox="0 0 14 14"><circle cx="4.5" cy="4" r="3" fill="#F4F4F0" stroke="#2A2A2A" stroke-width="1.1"/><circle cx="10" cy="10" r="3" fill="#F4F4F0" stroke="#2A2A2A" stroke-width="1.1"/><circle cx="8" cy="7.5" r="2.6" fill="#F4F4F0" stroke="#2A2A2A" stroke-width="1.1"/><path d="M7 2.5H10.5V5.5" stroke="#1F3A6A" stroke-width="1.2" fill="none"/></svg>
<svg style="left:900px;top:127px;" width="14" height="14" viewBox="0 0 14 14"><path d="M5.5 1.5V12.5H1Z" fill="#FAFAFA" stroke="#222" stroke-width="1.1"/><path d="M8.5 1.5V12.5H13Z" fill="#FAFAFA" stroke="#222" stroke-width="1.1"/></svg>
<svg style="left:900px;top:145px;" width="14" height="14" viewBox="0 0 14 14"><path d="M1.5 11.5V7.5Q1.5 5.5 4 5.5V4Q4 1.5 7 1.5Q10 1.5 10 4V5.5H10.5Q12.5 5.5 12.5 8V11.5Z" fill="#FAFAFA" stroke="#1F3A6A" stroke-width="1.2"/><path d="M3.5 9.5H10.5" stroke="#6A8AC4" stroke-width="1.2"/></svg>
<svg style="left:900px;top:163px;" width="14" height="14" viewBox="0 0 14 14"><rect x="1.5" y="1.5" width="4.5" height="4.5" fill="#FAFAFA" stroke="#222" stroke-width="1.1"/><rect x="8" y="1.5" width="4.5" height="4.5" fill="#FAFAFA" stroke="#222" stroke-width="1.1"/><rect x="1.5" y="8" width="4.5" height="4.5" fill="#FAFAFA" stroke="#222" stroke-width="1.1"/><rect x="8" y="8" width="4.5" height="4.5" fill="#FAFAFA" stroke="#222" stroke-width="1.1"/></svg>
<svg style="left:900px;top:180px;" width="14" height="14" viewBox="0 0 14 14"><path d="M7 0.5V13.5M0.5 7H13.5" stroke="#2A4A7A" stroke-width="1.8"/><path d="M7 0L4.5 3H9.5Z M7 14L4.5 11H9.5Z M0 7L3 4.5V9.5Z M14 7L11 4.5V9.5Z" fill="#2A4A7A"/></svg>
<svg style="left:900px;top:198px;" width="14" height="14" viewBox="0 0 14 14"><path d="M4 3Q1 6 2.5 9.5Q5 13 9 12Q13 10 12 6Q11 3 8 2.5" stroke="#1F3A6A" stroke-width="1.8" fill="none"/><path d="M2 1L6 3L3 6Z" fill="#1F3A6A"/></svg>
<svg style="left:900px;top:215px;" width="14" height="14" viewBox="0 0 14 14"><rect x="1.5" y="1.5" width="11" height="11" fill="#E8EEF6" stroke="#222" stroke-width="1.1" stroke-dasharray="2 1"/><rect x="1.5" y="6" width="6" height="6.5" fill="none" stroke="#222" stroke-width="1.1" stroke-dasharray="2 1"/></svg>
<svg style="left:900px;top:233px;" width="14" height="14" viewBox="0 0 14 14"><path d="M1.5 1.5H6L12.5 12.5H1.5Z" fill="#E8EEF6" stroke="#222" stroke-width="1.2"/><path d="M5.5 2V12" stroke="#222" stroke-dasharray="1.5 1"/></svg>
<svg style="left:900px;top:250px;" width="14" height="14" viewBox="0 0 14 14"><path d="M1 8H13" stroke="#333" stroke-width="1" stroke-dasharray="2 1"/><path d="M5 12L9 3" stroke="#1F3A6A" stroke-width="1.4"/></svg>
<svg style="left:900px;top:268px;" width="14" height="14" viewBox="0 0 14 14"><path d="M1 8H7" stroke="#333" stroke-width="1" stroke-dasharray="2 1"/><path d="M6 12L12 3" stroke="#1F3A6A" stroke-width="1.4"/><path d="M7 9L9 7" stroke="#222"/></svg>
<svg style="left:900px;top:286px;" width="14" height="14" viewBox="0 0 14 14"><rect x="1.5" y="2.5" width="11" height="9" fill="#E8EEF6" stroke="#222" stroke-width="1.3"/><path d="M5 2V4M9 2V4" stroke="#fff" stroke-width="2"/></svg>
<svg style="left:900px;top:303px;" width="14" height="14" viewBox="0 0 14 14"><path d="M1.5 5V12.5H12.5V5M1.5 1.5V3M12.5 1.5V3" stroke="#222" stroke-width="1.3" fill="#E8EEF6"/></svg>
<svg style="left:900px;top:321px;" width="14" height="14" viewBox="0 0 14 14"><path d="M1 7H5M9 7H13" stroke="#111" stroke-width="1.6"/><path d="M4 4L7 7L4 10Z M10 4L7 7L10 10Z" fill="#111"/></svg>
<svg style="left:900px;top:338px;" width="14" height="14" viewBox="0 0 14 14"><path d="M2 13V2H13" stroke="#222" stroke-width="1.5" fill="none"/><path d="M3 8L8 3" stroke="#6A8AC4" stroke-width="1.5"/></svg>
<svg style="left:900px;top:356px;" width="14" height="14" viewBox="0 0 14 14"><path d="M2 13V7Q2 2 7 2H13" stroke="#222" stroke-width="1.5" fill="none"/><path d="M3 7Q4 3 8 3" stroke="#6A8AC4" stroke-width="1.5" fill="none"/></svg>
<svg style="left:900px;top:374px;" width="14" height="14" viewBox="0 0 14 14"><path d="M2 12L7 5L12 10L6 8Z" fill="#C86020"/><path d="M3 3L11 11M11 3L3 11" stroke="#A04A20" stroke-width="1.5"/><path d="M10 6L13 2" stroke="#888"/></svg>
<div style="left:897px;top:396px;width:20px;height:83px;background:linear-gradient(90deg,#FAF9F4,#EFECE2);border-right:1px solid #D2CEC0;border-bottom:1px solid #D2CEC0"></div>
<div style="left:899px;top:399px;width:15px;height:3px;border-top:1px solid #C8C4B4;border-bottom:1px solid #C8C4B4"></div>
<svg style="left:900px;top:405px;" width="14" height="14" viewBox="0 0 14 14"><rect x="1.5" y="1.5" width="8" height="8" fill="#DDE6F2" stroke="#556"/><rect x="3.5" y="3.5" width="9" height="9" fill="#3E6AAA" stroke="#1F3A6A"/></svg>
<svg style="left:900px;top:423px;" width="14" height="14" viewBox="0 0 14 14"><rect x="1.5" y="1.5" width="8" height="8" fill="#DDE6F2" stroke="#556"/><rect x="3.5" y="3.5" width="7" height="7" fill="#3E6AAA" stroke="#1F3A6A"/><rect x="6.5" y="6.5" width="7" height="7" fill="#E8EEF6" stroke="#556"/></svg>
<svg style="left:900px;top:440px;" width="14" height="14" viewBox="0 0 14 14"><rect x="1.5" y="1.5" width="9" height="9" fill="#3E6AAA" stroke="#1F3A6A"/><rect x="4.5" y="4.5" width="9" height="9" fill="#5A84C0" stroke="#1F3A6A"/></svg>
<svg style="left:900px;top:458px;" width="14" height="14" viewBox="0 0 14 14"><rect x="1.5" y="1.5" width="9" height="9" fill="#2E5A9A" stroke="#1F3A6A"/><rect x="4.5" y="4.5" width="9" height="9" fill="#E8EEF6" stroke="#556"/></svg>
<div style="left:920px;top:81px;width:104px;height:517px;background:#EDECE7"></div>
<div style="left:920px;top:81px;width:1px;height:517px;background:#55554E"></div>
<div style="left:921px;top:81px;width:1px;height:517px;background:#A8A69C"></div>
<div style="left:922px;top:84px;width:102px;height:12px;background:#EDECE7"></div>
<div style="left:929px;top:87px;width:8px;height:8px;background:#fff;border:1px solid #B0AC9E"><div style="left:1px;top:2px;width:5px;height:2px;background:#111"></div></div>
<div style="left:940px;top:88px;width:70px;height:5px;border-top:1px solid #C8C4B4;border-bottom:1px solid #C8C4B4"></div>
<svg style="left:1011px;top:86px;" width="9" height="9" viewBox="0 0 9 9"><path d="M1.5 1.5L7.5 7.5M7.5 1.5L1.5 7.5" stroke="#111" stroke-width="1.7"/></svg>
<div style="left:922px;top:97px;width:100px;height:386px;background:#F0EFE9;border-top:1px solid #C9C6BA;border-bottom:2px solid #C4C1B4;border-right:1px solid #CFCCC0"></div>
<div style="left:924px;top:98px;width:17px;height:384px;background:linear-gradient(90deg,#E2E0D8,#DCDAD0)"></div>
<div style="left:922px;top:163px;width:99px;height:1px;background:#C9C6BA"></div>
<div style="left:922px;top:164px;width:99px;height:1px;background:#FAFAF6"></div>
<div style="left:922px;top:210px;width:99px;height:1px;background:#C9C6BA"></div>
<div style="left:922px;top:211px;width:99px;height:1px;background:#FAFAF6"></div>
<div style="left:922px;top:234px;width:99px;height:1px;background:#C9C6BA"></div>
<div style="left:922px;top:235px;width:99px;height:1px;background:#FAFAF6"></div>
<div style="left:922px;top:281px;width:99px;height:1px;background:#C9C6BA"></div>
<div style="left:922px;top:282px;width:99px;height:1px;background:#FAFAF6"></div>
<div style="left:922px;top:346px;width:99px;height:1px;background:#C9C6BA"></div>
<div style="left:922px;top:347px;width:99px;height:1px;background:#FAFAF6"></div>
<div style="left:922px;top:392px;width:99px;height:1px;background:#C9C6BA"></div>
<div style="left:922px;top:393px;width:99px;height:1px;background:#FAFAF6"></div>
<div style="left:922px;top:437px;width:99px;height:1px;background:#C9C6BA"></div>
<div style="left:922px;top:438px;width:99px;height:1px;background:#FAFAF6"></div>
<svg style="left:927px;top:101px;" width="19" height="17" viewBox="0 0 19 17"><path d="M1 5L9.5 1L18 5L9.5 9Z" fill="#7F9CC4" stroke="#5E7EA8" stroke-width="0.6"/><path d="M1 8.5L9.5 12.5L18 8.5" stroke="#6E8CB6" stroke-width="2.2" fill="none"/><path d="M1 12L9.5 16L18 12" stroke="#6E8CB6" stroke-width="2.2" fill="none"/></svg>
<svg style="left:987px;top:104px;" width="14" height="13" viewBox="0 0 14 13"><path d="M1 4L7 1L13 4L7 7Z" fill="#A8B0C8"/><path d="M1 7L7 10L13 7L7 4Z" fill="#E0D058"/><path d="M0 13L5 8" stroke="#222" stroke-width="1.5"/></svg>
<svg style="left:1004px;top:104px;" width="15" height="13" viewBox="0 0 15 13"><path d="M1 4L7.5 1L14 4L7.5 7Z" fill="#9EB0C8"/><path d="M1 7L7.5 10L14 7" stroke="#8A9CB4" stroke-width="1.6" fill="none"/><path d="M1 10L7.5 13L14 10" stroke="#8A9CB4" stroke-width="1.6" fill="none"/></svg>
<div style="left:967px;top:122px;width:36px;height:16px;background:#fff;border:1px solid #9DA5AD"><div class="t" style="left:3px;top:3.0px;font-size:9.5px;color:#000">Unsa</div><div class="dd" style="width:12px;"></div></div>
<svg style="left:1005px;top:123px;" width="15" height="15" viewBox="0 0 15 15"><path d="M1 4L7 1L13 4L7 7Z" fill="#A4B8D4"/><rect x="5.5" y="6.5" width="9" height="8" fill="#E8EEF6" stroke="#1E3A6A" stroke-width="1.2"/><rect x="5.5" y="6.5" width="9" height="2" fill="#1E3A6A"/></svg>
<svg style="left:951px;top:144px;" width="14" height="14" viewBox="0 0 14 14"><path d="M1 7L7 4L13 7L7 10Z" fill="#B4BCCC"/><path d="M1 10L7 13L13 10" stroke="#7A8294" fill="none"/><path d="M4 6Q5 1 10 2" stroke="#1C2C4C" stroke-width="2" fill="none"/></svg>
<div style="left:967px;top:141px;width:53px;height:18px;background:#fff;border:1px solid #9DA5AD"><div class="dd" style="width:12px"></div></div>
<svg style="left:970px;top:144px;" width="30" height="12" viewBox="0 0 30 12"><path d="M4 1Q0 1 0.5 5Q1 7 2.5 8.5V11H5.5V8.5Q7 7 7.5 5Q8 1 4 1Z" fill="#F4F2D8" stroke="#555" stroke-width="0.8"/><circle cx="15" cy="6" r="4.5" fill="#E8E030" stroke="#8A8A20"/><path d="M26 1.5Q22 6 26 10.5Z" fill="#9AAAB4"/></svg>
<svg style="left:927px;top:168px;" width="18" height="17" viewBox="0 0 18 17"><path d="M1 16V6L9 1V16Z" fill="#5E86BC"/><path d="M7 16L12.5 6L18 16Z" fill="#7EA2D0"/></svg>
<svg style="left:963px;top:169px;" width="14" height="14" viewBox="0 0 14 14"><path d="M2 12L12 2" stroke="#222" stroke-width="1.5"/><circle cx="2" cy="12" r="1" fill="#111"/></svg>
<svg style="left:980px;top:169px;" width="14" height="14" viewBox="0 0 14 14"><path d="M1 13L13 1" stroke="#111" stroke-width="1.4"/><path d="M0 14L4 12L2 10Z M14 0L10 2L12 4Z" fill="#111"/></svg>
<svg style="left:997px;top:169px;" width="16" height="14" viewBox="0 0 16 14"><path d="M1 10H9Q13 10 13 6.5Q13 3 9 3" stroke="#1F3A6A" stroke-width="1.6" fill="none"/><path d="M9 1V5" stroke="#1F3A6A" stroke-width="1.4"/></svg>
<svg style="left:1015px;top:181px;" width="6" height="4" viewBox="0 0 6 4"><path d="M0 0H6L3 3.5Z" fill="#222"/></svg>
<svg style="left:963px;top:187px;" width="14" height="14" viewBox="0 0 14 14"><path d="M1 12H13" stroke="#222" stroke-width="1.2"/><path d="M3 11L11 3L13 5L5 12Z" fill="#E8D86A" stroke="#555" stroke-width="0.8"/></svg>
<svg style="left:980px;top:187px;" width="14" height="14" viewBox="0 0 14 14"><circle cx="4" cy="4" r="3" fill="none" stroke="#222" stroke-width="1.5"/><circle cx="10" cy="10" r="3" fill="none" stroke="#222" stroke-width="1.5"/><path d="M6 3H10V6" stroke="#1F3A6A" stroke-width="1.4" fill="none"/></svg>
<svg style="left:997px;top:187px;" width="14" height="14" viewBox="0 0 14 14"><path d="M6 1V13H1Z M8 1V13H13Z" fill="#F0F0F0" stroke="#222" stroke-width="1.2"/></svg>
<svg style="left:1015px;top:200px;" width="6" height="4" viewBox="0 0 6 4"><path d="M0 0H6L3 3.5Z" fill="#222"/></svg>
<svg style="left:928px;top:214px;" width="18" height="15" viewBox="0 0 18 15"><path d="M2 12L14 2" stroke="#5E86BC" stroke-width="4"/><path d="M1 14L4 11" stroke="#5E86BC" stroke-width="2"/></svg>
<svg style="left:969px;top:214px;" width="15" height="15" viewBox="0 0 15 15"><path d="M2 13L5 6L10 3L13 7L9 12Z" fill="#C8D8EC" stroke="#3E6AAA" stroke-width="1.2"/><path d="M11 1V5M9 3H13" stroke="#111"/></svg>
<svg style="left:987px;top:214px;" width="15" height="15" viewBox="0 0 15 15"><path d="M2 13L5 6L10 3L13 7L9 12Z" fill="#C8D8EC" stroke="#3E6AAA" stroke-width="1.2"/><path d="M10 1L13 4M13 1L10 4" stroke="#D03030" stroke-width="1.3"/></svg>
<svg style="left:1004px;top:214px;" width="15" height="15" viewBox="0 0 15 15"><path d="M2 13L5 6L9 5L10 9Z" fill="#C8D8EC" stroke="#3E6AAA" stroke-width="1.2"/><rect x="7.5" y="2.5" width="6" height="5" fill="#E8EEF6" stroke="#3E6AAA"/></svg>
<svg style="left:927px;top:243px;" width="19" height="9" viewBox="0 0 19 9"><path d="M1 4.5H18" stroke="#8AA0C4" stroke-width="1.2"/><path d="M1 1V8M18 1V8" stroke="#8AA0C4" stroke-width="1.4"/><path d="M2 4.5L5 2.5V6.5Z M17 4.5L14 2.5V6.5Z" fill="#8AA0C4"/></svg>
<svg style="left:979px;top:240px;" width="14" height="14" viewBox="0 0 14 14"><path d="M1 2V12M13 2V12" stroke="#111" stroke-width="1.6"/><path d="M1 7H13" stroke="#111" stroke-width="1.2"/><path d="M1 7L4 5V9Z M13 7L10 5V9Z M4 4H10" fill="#111" stroke="#111"/></svg>
<div style="left:996px;top:240px;width:1px;height:16px;background:#999"></div>
<svg style="left:999px;top:240px;" width="16" height="14" viewBox="0 0 16 14"><path d="M1 2V12M14 2V12" stroke="#111" stroke-width="1.6"/><path d="M1 5H14" stroke="#111" stroke-width="1.2"/></svg>
<svg style="left:1015px;top:254px;" width="6" height="4" viewBox="0 0 6 4"><path d="M0 0H6L3 3.5Z" fill="#222"/></svg>
<div style="left:967px;top:259px;width:36px;height:17px;background:#fff;border:1px solid #9DA5AD"><div class="t" style="left:13px;top:3.0px;font-size:9.5px;color:#000">S</div><div class="dd" style="width:12px;"></div></div>
<svg style="left:1004px;top:259px;" width="16" height="16" viewBox="0 0 16 16"><path d="M1 13H15" stroke="#111" stroke-width="1.5"/><path d="M1 11V15M15 11V15" stroke="#111" stroke-width="1.5"/><path d="M4 12L14 2" stroke="#333" stroke-width="1.2"/><path d="M7 11L14 4" stroke="#999" stroke-width="2"/></svg>
<svg style="left:928px;top:285px;" width="18" height="18" viewBox="0 0 18 18"><text x="1" y="16" font-size="18" font-family="Liberation Sans" fill="#6E8CB6" font-weight="bold">A</text></svg>
<div class="t" style="left:980px;top:286px;font-size:14px;color:#111">A</div>
<div class="t" style="left:996px;top:286px;font-size:14px;color:#222">A</div>
<svg style="left:1004px;top:286px;" width="5" height="15" viewBox="0 0 5 15"><path d="M0 1H5M2.5 1V14M0 14H5" stroke="#333" stroke-width="1"/></svg>
<div style="left:1012px;top:285px;width:1px;height:18px;background:#999"></div>
<svg style="left:1015px;top:298px;" width="6" height="4" viewBox="0 0 6 4"><path d="M0 0H6L3 3.5Z" fill="#222"/></svg>
<div style="left:967px;top:305px;width:36px;height:17px;background:#fff;border:1px solid #9DA5AD"><div class="t" style="left:13px;top:3.0px;font-size:9.5px;color:#000">S</div><div class="dd" style="width:12px;"></div></div>
<svg style="left:1004px;top:305px;" width="16" height="16" viewBox="0 0 16 16"><text x="0" y="13" font-size="14" font-family="Liberation Sans" fill="#222">A</text><path d="M5 14L14 7" stroke="#555" stroke-width="2"/></svg>
<div style="left:967px;top:325px;width:53px;height:17px;background:#fff;border:1px solid #9DA5AD"><div class="t" style="left:3px;top:3.0px;font-size:9.5px;color:#000">0.2000</div><div class="dd" style="width:12px;"></div></div>
<svg style="left:927px;top:350px;" width="20" height="20" viewBox="0 0 20 20"><circle cx="15" cy="5" r="4" fill="#7E9ED0"/><path d="M2 19V11L11 5" stroke="#8AA0C4" stroke-width="1.5" fill="none"/><circle cx="2" cy="19" r="1.2" fill="#556"/></svg>
<svg style="left:964px;top:350px;" width="12" height="14" viewBox="0 0 12 14"><circle cx="6" cy="5" r="3.5" fill="#fff" stroke="#1F3A6A" stroke-width="1.4"/><path d="M4 8L2 13" stroke="#1F3A6A" stroke-width="1.4"/></svg>
<div style="left:978px;top:349px;width:1px;height:18px;background:#999"></div>
<svg style="left:982px;top:350px;" width="14" height="14" viewBox="0 0 14 14"><circle cx="6" cy="5" r="3.5" fill="#fff" stroke="#1F3A6A" stroke-width="1.4"/><path d="M4 8L2 13" stroke="#1F3A6A" stroke-width="1.4"/><path d="M10 10V14M8 12H12" stroke="#111" stroke-width="1.3"/></svg>
<svg style="left:999px;top:350px;" width="14" height="14" viewBox="0 0 14 14"><circle cx="6" cy="5" r="3.5" fill="#fff" stroke="#1F3A6A" stroke-width="1.4"/><path d="M4 8L2 13" stroke="#1F3A6A" stroke-width="1.4"/><path d="M8 9L12 13M12 9L8 13" stroke="#D03030" stroke-width="1.3"/></svg>
<svg style="left:1015px;top:364px;" width="6" height="4" viewBox="0 0 6 4"><path d="M0 0H6L3 3.5Z" fill="#222"/></svg>
<div style="left:967px;top:370px;width:36px;height:17px;background:#fff;border:1px solid #9DA5AD"><div class="t" style="left:13px;top:3.0px;font-size:9.5px;color:#000">S</div><div class="dd" style="width:12px;"></div></div>
<svg style="left:1004px;top:370px;" width="16" height="16" viewBox="0 0 16 16"><circle cx="7" cy="5" r="3.5" fill="#fff" stroke="#1F3A6A" stroke-width="1.4"/><path d="M5 8L3 14" stroke="#1F3A6A" stroke-width="1.4"/><path d="M6 14L15 8" stroke="#444" stroke-width="2"/></svg>
<svg style="left:928px;top:396px;" width="18" height="15" viewBox="0 0 18 15"><rect x="0.5" y="0.5" width="17" height="14" fill="#5476A6"/><rect x="0.5" y="0.5" width="17" height="3" fill="#3E5E8E"/><path d="M0 5H18M0 9.5H18M6 3V15M12 3V15" stroke="#D8E2EE" stroke-width="0.9"/></svg>
<svg style="left:968px;top:397px;" width="15" height="13" viewBox="0 0 15 13"><rect x="0.5" y="0.5" width="14" height="12" fill="#E8EEF8" stroke="#3E5A8A" stroke-width="1.2"/><rect x="0.5" y="0.5" width="14" height="3" fill="#4A5EA8"/><path d="M0 7H15M5 3V13M10 3V13" stroke="#5A6EB0"/></svg>
<div style="left:985px;top:395px;width:1px;height:18px;background:#999"></div>
<svg style="left:988px;top:396px;" width="15" height="15" viewBox="0 0 15 15"><rect x="2.5" y="6.5" width="11" height="8" fill="#E8EEF6" stroke="#333"/><path d="M3 6Q3 2 7 2" stroke="#2A9A2A" stroke-width="1.8" fill="none"/><path d="M12 9Q12 13 8 13" stroke="#2A9A2A" stroke-width="1.8" fill="none"/><path d="M9 6L14 1" stroke="#555" stroke-width="1.5"/></svg>
<svg style="left:1005px;top:396px;" width="15" height="15" viewBox="0 0 15 15"><rect x="1.5" y="6.5" width="11" height="8" fill="#8AB4E4" stroke="#3E5A8A"/><path d="M1 10H13M7 6V15" stroke="#fff"/><path d="M8 7L14 1" stroke="#555" stroke-width="1.5"/></svg>
<div style="left:967px;top:416px;width:36px;height:17px;background:#fff;border:1px solid #9DA5AD"><div class="t" style="left:3px;top:3.0px;font-size:9.5px;color:#000">Star</div><div class="dd" style="width:12px;"></div></div>
<svg style="left:1005px;top:416px;" width="15" height="15" viewBox="0 0 15 15"><rect x="1.5" y="5.5" width="11" height="9" fill="#3E5EA0" stroke="#34507F"/><path d="M1 9H12M1 12H12M5 6V14M9 6V14" stroke="#C8D3EA" stroke-width="0.8"/><path d="M4 11L14 1" stroke="#555" stroke-width="1.5"/></svg>
<svg style="left:926px;top:441px;" width="20" height="20" viewBox="0 0 20 20"><circle cx="10" cy="10" r="8.5" fill="#E8ECF2" stroke="#9AA6B8" stroke-width="1.5"/><path d="M6 6L14 14" stroke="#6A7A90" stroke-width="2"/><path d="M8 14L12 6" stroke="#8A9AB0"/></svg>
<svg style="left:979px;top:442px;" width="15" height="15" viewBox="0 0 15 15"><path d="M1 6Q5 1 9 5L11 9Q9 14 4 12Z" fill="#D88F8F"/><rect x="8" y="9" width="5" height="4" fill="#1F3F6A"/><path d="M11 1V5M9 3H13" stroke="#222"/></svg>
<svg style="left:996px;top:442px;" width="15" height="15" viewBox="0 0 15 15"><circle cx="6" cy="6" r="4.5" fill="#DDE3EA" stroke="#5C6A78" stroke-width="1.3"/><path d="M9 9L13 13" stroke="#5A4A3A" stroke-width="2"/><path d="M11 0V4M9 2H13" stroke="#111"/></svg>
<div style="left:1013px;top:440px;width:1px;height:18px;background:#555"></div>
<svg style="left:1015px;top:454px;" width="6" height="4" viewBox="0 0 6 4"><path d="M0 0H6L3 3.5Z" fill="#222"/></svg>
<svg style="left:951px;top:462px;" width="14" height="14" viewBox="0 0 14 14"><circle cx="7" cy="7" r="6" fill="#E8EEF6" stroke="#6A8AC4" stroke-width="1.2"/><path d="M9 4L5 7L9 10Z" fill="#6A8AC4"/></svg>
<div style="left:967px;top:461px;width:53px;height:18px;background:#F0EEE4;border:1px solid #CFCBBD"><div class="dd ddx" style="width:12px;background:#EEEBE0;"></div></div>
<div style="left:21px;top:527px;width:875px;height:14px;background:#ECE9D8"></div>
<div style="left:22px;top:528px;width:50px;height:12px;background:#EDEADC"></div>
<div style="left:22.0px;top:528px;width:1px;height:12px;background:#D8D4C4"></div>
<div style="left:23.0px;top:528px;width:1px;height:12px;background:#FAF9F4"></div>
<svg style="left:24.0px;top:528px;" width="11" height="12" viewBox="0 0 11 12"><path d="M3 2V9M8 2L4.5 5.5L8 9Z" stroke="#BEBAAC" stroke-width="1.3" fill="#BEBAAC"/></svg>
<div style="left:34.5px;top:528px;width:1px;height:12px;background:#D8D4C4"></div>
<div style="left:35.5px;top:528px;width:1px;height:12px;background:#FAF9F4"></div>
<svg style="left:36.5px;top:528px;" width="11" height="12" viewBox="0 0 11 12"><path d="M7 2L3.5 5.5L7 9Z" stroke="#BEBAAC" stroke-width="1.3" fill="#BEBAAC"/></svg>
<div style="left:47.0px;top:528px;width:1px;height:12px;background:#D8D4C4"></div>
<div style="left:48.0px;top:528px;width:1px;height:12px;background:#FAF9F4"></div>
<svg style="left:49.0px;top:528px;" width="11" height="12" viewBox="0 0 11 12"><path d="M4 2L7.5 5.5L4 9Z" stroke="#BEBAAC" stroke-width="1.3" fill="#BEBAAC"/></svg>
<div style="left:59.5px;top:528px;width:1px;height:12px;background:#D8D4C4"></div>
<div style="left:60.5px;top:528px;width:1px;height:12px;background:#FAF9F4"></div>
<svg style="left:61.5px;top:528px;" width="11" height="12" viewBox="0 0 11 12"><path d="M3 2L6.5 5.5L3 9ZM8 2V9" stroke="#BEBAAC" stroke-width="1.3" fill="#BEBAAC"/></svg>
<svg style="left:60px;top:527px;" width="150" height="14" viewBox="0 0 150 14"><path d="M11.6 0.5H52.6L48.75 12.5H15.5Z" fill="#808080"/><path d="M52.6 0.5H95.6L91.7 12.5H48.75Z" fill="#EFECE0"/><path d="M95.6 0.5H139.6L136.6 12.5H91.7Z" fill="#EFECE0"/><path d="M52.6 0.5L48.75 12.5" stroke="#F8F8F8" stroke-width="1"/><path d="M95.6 0.5L91.7 12.5M139.6 0.5L136.6 12.5" stroke="#6A6A64" stroke-width="1"/><path d="M48.75 12.5H136.6" stroke="#FAFAF6" stroke-width="1"/></svg>
<div class="t" style="left:80px;top:530px;font-size:8.8px;">Model</div>
<div class="t" style="left:116px;top:530px;font-size:8.8px;">Layout1</div>
<div class="t" style="left:160px;top:530px;font-size:8.8px;">Layout2</div>
<div style="left:21px;top:540px;width:896px;height:5px;background:#F3F1E8"></div>
<div style="left:590px;top:527px;width:291px;height:14px;background:linear-gradient(#F4F3EE,#FEFEFB 40%,#F2F1EA)"></div>
<div style="left:593px;top:528px;width:14px;height:12px;background:linear-gradient(#E4EBFC,#C6D4F6);border:1px solid #F4F6FC;border-radius:2px;"><svg style="left:1px;top:0px" width="11" height="11"><path d="M6.5 2.5L3.5 5.5L6.5 8.5" stroke="#45557E" stroke-width="2" fill="none"/></svg></div>
<div style="left:867px;top:528px;width:14px;height:12px;background:linear-gradient(#E4EBFC,#C6D4F6);border:1px solid #F4F6FC;border-radius:2px;"><svg style="left:1px;top:0px" width="11" height="11"><path d="M4 2.5L7 5.5L4 8.5" stroke="#45557E" stroke-width="2" fill="none"/></svg></div>
<div style="left:772px;top:528px;width:14px;height:12px;background:linear-gradient(90deg,#D4E0FA,#C0D2F6);border:1px solid #fff;border-radius:2px"><div style="left:4px;top:3px;width:1px;height:6px;background:#8CA4D8"></div><div style="left:6px;top:3px;width:1px;height:6px;background:#8CA4D8"></div><div style="left:8px;top:3px;width:1px;height:6px;background:#8CA4D8"></div><div style="left:10px;top:3px;width:1px;height:6px;background:#8CA4D8"></div></div>
<div style="left:881px;top:527px;width:15px;height:14px;background:#EDEBE0"></div>
<div style="left:0px;top:541px;width:917px;height:57px;background:#ECE9D8"></div>
<div style="left:0px;top:545px;width:917px;height:1px;background:#55534A"></div>
<div style="left:0px;top:546px;width:917px;height:1px;background:#fff"></div>
<div style="left:7px;top:552px;width:2px;height:41px;border-left:1px solid #fff;border-right:1px solid #B8B4A4"></div>
<div style="left:10px;top:552px;width:2px;height:41px;border-left:1px solid #fff;border-right:1px solid #B8B4A4"></div>
<div style="left:13px;top:554px;width:898px;height:41px;background:#fff;border-top:1px solid #404040;border-left:1px solid #404040"></div>
<div style="left:14px;top:580px;width:897px;height:1px;background:#8A8A8A"></div>
<div class="t" style="left:14px;top:558px;font-size:10.9px;font-family:'Liberation Mono',monospace;color:#333">Command: _saveas</div>
<div class="t" style="left:14px;top:585px;font-size:10.9px;font-family:'Liberation Mono',monospace;color:#333">Command:</div>
<div style="left:898px;top:556px;width:13px;height:11px;background:linear-gradient(#E4EBFC,#C6D4F6);border:1px solid #F4F6FC;border-radius:2px;"><svg style="left:1px;top:0px" width="11" height="11"><path d="M2.5 6L5.5 3L8.5 6" stroke="#45557E" stroke-width="2" fill="none"/></svg></div>
<div style="left:898px;top:568px;width:13px;height:12px;background:linear-gradient(#E4EBFC,#C6D4F6);border:1px solid #F4F6FC;border-radius:2px;"><svg style="left:1px;top:0px" width="11" height="11"><path d="M2.5 4L5.5 7L8.5 4" stroke="#45557E" stroke-width="2" fill="none"/></svg></div>
<div style="left:896px;top:581px;width:21px;height:17px;background:#EFEDE3"></div>
<div style="left:844px;top:581px;width:52px;height:14px;background:#F8F8F4"></div>
<div style="left:845px;top:583px;width:12px;height:12px;background:linear-gradient(#E4EBFC,#C6D4F6);border:1px solid #F4F6FC;border-radius:2px;"><svg style="left:0px;top:0px" width="11" height="11"><path d="M6.5 2.5L3.5 5.5L6.5 8.5" stroke="#45557E" stroke-width="2" fill="none"/></svg></div>
<div style="left:858px;top:583px;width:13px;height:12px;background:linear-gradient(90deg,#D4E0FA,#C0D2F6);border:1px solid #fff;border-radius:2px"><div style="left:3px;top:3px;width:1px;height:6px;background:#8CA4D8"></div><div style="left:5px;top:3px;width:1px;height:6px;background:#8CA4D8"></div><div style="left:7px;top:3px;width:1px;height:6px;background:#8CA4D8"></div><div style="left:9px;top:3px;width:1px;height:6px;background:#8CA4D8"></div></div>
<div style="left:884px;top:583px;width:12px;height:12px;background:linear-gradient(#E4EBFC,#C6D4F6);border:1px solid #F4F6FC;border-radius:2px;"><svg style="left:0px;top:0px" width="11" height="11"><path d="M4 2.5L7 5.5L4 8.5" stroke="#45557E" stroke-width="2" fill="none"/></svg></div>
<div style="left:0px;top:598px;width:1024px;height:18px;background:#ECE9D8"></div>
<div style="left:0px;top:597px;width:1024px;height:1px;background:#D0CCBC"></div>
<div style="left:4px;top:601px;width:132px;height:14px;background:#F0EEE4;border:1px solid;border-color:#A8A496 #C8C4B4 #fff #A8A496"></div>
<div class="t" style="left:5px;top:605px;font-size:8.8px;">62.8251, 21.0576, 0.0000</div>
<div style="left:137px;top:600px;width:29px;height:15px;background:#EFEDE2;border:1px solid;border-color:#F8F8F4 #C8C4B4 #C8C4B4 #F8F8F4"></div>
<div class="t" style="left:139px;top:605px;font-size:8.8px;">SNAP</div>
<div style="left:167px;top:600px;width:28px;height:15px;background:#EFEDE2;border:1px solid;border-color:#F8F8F4 #C8C4B4 #C8C4B4 #F8F8F4"></div>
<div class="t" style="left:169px;top:605px;font-size:8.8px;">GRID</div>
<div style="left:196px;top:600px;width:37px;height:15px;background:#EFEDE2;border:1px solid;border-color:#F8F8F4 #C8C4B4 #C8C4B4 #F8F8F4"></div>
<div class="t" style="left:198px;top:605px;font-size:8.8px;">ORTHO</div>
<div style="left:233px;top:600px;width:36px;height:15px;border:1px solid;border-color:#505050 #fff #fff #505050;background:#F4F3EC"></div>
<div class="t" style="left:235px;top:605px;font-size:8.8px;">POLAR</div>
<div style="left:270px;top:600px;width:33px;height:15px;border:1px solid;border-color:#505050 #fff #fff #505050;background:#F4F3EC"></div>
<div class="t" style="left:272px;top:605px;font-size:8.8px;">OSNAP</div>
<div style="left:304px;top:600px;width:41px;height:15px;border:1px solid;border-color:#505050 #fff #fff #505050;background:#F4F3EC"></div>
<div class="t" style="left:306px;top:605px;font-size:8.8px;">OTRACK</div>
<div style="left:346px;top:600px;width:31px;height:15px;border:1px solid;border-color:#505050 #fff #fff #505050;background:#F4F3EC"></div>
<div class="t" style="left:348px;top:605px;font-size:8.8px;">DUCS</div>
<div style="left:378px;top:600px;width:24px;height:15px;background:#EFEDE2;border:1px solid;border-color:#F8F8F4 #C8C4B4 #C8C4B4 #F8F8F4"></div>
<div class="t" style="left:380px;top:605px;font-size:8.8px;">DYN</div>
<div style="left:403px;top:600px;width:23px;height:15px;background:#EFEDE2;border:1px solid;border-color:#F8F8F4 #C8C4B4 #C8C4B4 #F8F8F4"></div>
<div class="t" style="left:405px;top:605px;font-size:8.8px;">LWT</div>
<div style="left:427px;top:600px;width:34px;height:15px;border:1px solid;border-color:#505050 #fff #fff #505050;background:#F4F3EC"></div>
<div class="t" style="left:429px;top:605px;font-size:8.8px;">MODEL</div>
<div class="t" style="left:816px;top:605px;font-size:8.6px;">Annotation Scale:</div>
<div class="t" style="left:890px;top:605px;font-size:8.8px;">1:1</div>
<svg style="left:905px;top:606px;" width="6" height="4" viewBox="0 0 6 4"><path d="M0 0H6L3 3.5Z" fill="#111"/></svg>
<svg style="left:917px;top:601px;" width="13" height="13" viewBox="0 0 13 13"><path d="M3 12L6 5L10 12Z" fill="none" stroke="#4A6AA8" stroke-width="1.2"/><circle cx="9" cy="4" r="3" fill="#F4E8A0"/></svg>
<svg style="left:938px;top:601px;" width="13" height="13" viewBox="0 0 13 13"><path d="M2 12L10 3" stroke="#B4B4B4" stroke-width="2"/><path d="M6 12L12 4" stroke="#C8C8C8" stroke-width="1.5"/></svg>
<div style="left:955px;top:600px;width:1px;height:15px;background:#C0BCA8"></div>
<svg style="left:957px;top:601px;" width="14" height="14" viewBox="0 0 14 14"><rect x="0.5" y="5.5" width="9" height="8" fill="#D8B020" stroke="#6A5410"/><path d="M6 5V3Q6 1 9 1Q12 1 12 3V5" stroke="#6A5410" stroke-width="1.8" fill="none"/></svg>
<svg style="left:974px;top:600px;" width="15" height="15" viewBox="0 0 15 15"><rect x="1" y="2" width="3" height="11" fill="#4A6A8A"/><rect x="5" y="2" width="3" height="11" fill="#7A9AB0"/><circle cx="11" cy="10" r="4" fill="#30A030"/><path d="M9 10L10.5 11.5L13 8.5" stroke="#fff" stroke-width="1.2" fill="none"/></svg>
<svg style="left:995px;top:607px;" width="7" height="4" viewBox="0 0 7 4"><path d="M0 0H7L3.5 4Z" fill="#111"/></svg>
<div style="left:1007px;top:601px;width:15px;height:14px;background:linear-gradient(#D8E4F8,#B4C8EC);border:1px solid #4A6AA0"></div>
<div style="left:0px;top:616px;width:1024px;height:24px;background:linear-gradient(#3A64A0 0px,#3A64A0 1px,#3C80E0 1.5px,#3A7EE0 2.5px,#1E58D8 4px,#2456D8 9px,#2262DC 18px,#1E4CC4 21px,#1C48C0 24px)"></div>
<div style="left:0px;top:615px;width:1024px;height:1px;background:#D4E4F4"></div>
<div style="left:0px;top:616px;width:77px;height:24px;background:linear-gradient(#3A8A3A 0px,#5CB85C 2px,#40A040 6px,#389838 16px,#2E882E 22px,#2A7A2A 24px);border-radius:0 10px 10px 0"></div>
<svg style="left:8px;top:619px;" width="17" height="17" viewBox="0 0 17 17"><g transform="skewX(-8) translate(2,0)"><path d="M2 3Q4.5 1.5 7.5 3V7.5Q4.5 6 2 7.5Z" fill="#E8602A"/><path d="M8.5 3Q11.5 4.5 14 3V7.5Q11.5 9 8.5 7.5Z" fill="#6CB83A"/><path d="M2 8.5Q4.5 7 7.5 8.5V13Q4.5 11.5 2 13Z" fill="#3A8AE0"/><path d="M8.5 8.5Q11.5 10 14 8.5V13Q11.5 14.5 8.5 13Z" fill="#F0C030"/></g></svg>
<div class="t" style="left:28px;top:621px;font-size:15.5px;transform:scaleX(0.87);transform-origin:0 0;font-style:italic;font-weight:bold;color:#F4FAF0">start</div>
<svg style="left:87px;top:620px;" width="13" height="14" viewBox="0 0 13 14"><path d="M2 1H11L12 3V11L10 13H2L1 11V3Z" fill="#E8F2FC" stroke="#2A5AB0"/><circle cx="6.5" cy="7" r="3.5" fill="none" stroke="#3A7AD0" stroke-width="1.5"/><path d="M6.5 7L10 5" stroke="#2A5AB0"/></svg>
<svg style="left:106px;top:620px;" width="16" height="16" viewBox="0 0 16 16"><path d="M8 2Q14 2 14 8H4Q4 13 8 13Q11 13 13 11" stroke="#4A9AE8" stroke-width="2.5" fill="none"/><path d="M1 12Q6 -2 15 2" stroke="#F0C040" stroke-width="1.2" fill="none"/></svg>
<svg style="left:124px;top:620px;" width="16" height="16" viewBox="0 0 16 16"><circle cx="8" cy="8" r="6.5" fill="#E8702A"/><circle cx="8" cy="8" r="4" fill="#F4A040"/><path d="M2 6Q4 2 9 2" stroke="#3A4A9A" stroke-width="2" fill="none"/></svg>
<div class="t" style="left:145px;top:620px;font-size:10px;color:#9CC0F8">»</div>
<div style="left:158px;top:618px;width:127px;height:21px;background:linear-gradient(#1E4CC0,#1A48B8 50%,#1C4CBC);border-radius:3px;box-shadow:inset 1px 1px 2px #0A2A80"></div>
<svg style="left:166px;top:621px;" width="14" height="14" viewBox="0 0 14 14"><rect x="0.5" y="0.5" width="13" height="13" fill="#3E9A86" stroke="#BFF0E4"/><path d="M2.5 10L5 3L7.5 10M3.5 7.5H6.5M9.5 3V10M2 11.5H12" stroke="#F0FFF8" stroke-width="1.1" fill="none"/></svg>
<div class="t" style="left:182px;top:624px;font-size:8.8px;color:#fff">AutoCAD 2008 - [E:\...</div>
<div style="left:287px;top:618px;width:126px;height:21px;background:linear-gradient(#4A8CF8,#3C80F4 50%,#3A78EC);border-radius:3px"></div>
<svg style="left:295px;top:621px;" width="14" height="15" viewBox="0 0 14 15"><path d="M3 14L5 2H10L12 14Z" fill="#D8D8D8" stroke="#8A8A8A"/><path d="M5 8H10" stroke="#E05050" stroke-width="2"/><path d="M4 11H11" stroke="#4070D0" stroke-width="2"/></svg>
<div class="t" style="left:310px;top:624px;font-size:8.8px;color:#fff">cad2.bmp - Paint</div>
<div style="left:701px;top:618px;width:123px;height:21px;background:linear-gradient(#E0E0E0,#B4B4B4 60%,#A0A0A0);border-radius:4px;border:1px solid #8A9AB8"></div>
<svg style="left:701px;top:619px;" width="18" height="19" viewBox="0 0 18 19"><circle cx="9" cy="9.5" r="6.5" fill="#F4F4F4" stroke="#8A8A8A"/></svg>
<svg style="left:716px;top:619px;" width="18" height="19" viewBox="0 0 18 19"><circle cx="9" cy="9.5" r="7.5" fill="#F4F4F4" stroke="#8A8A8A"/></svg>
<svg style="left:731px;top:619px;" width="18" height="19" viewBox="0 0 18 19"><circle cx="9" cy="9.5" r="6.5" fill="#F4F4F4" stroke="#8A8A8A"/></svg>
<svg style="left:705px;top:625px;" width="10" height="7" viewBox="0 0 10 7"><path d="M5 0.5L1.5 3.5L5 6.5ZM9 0.5L5.5 3.5L9 6.5Z" fill="#333"/></svg>
<svg style="left:721px;top:623px;" width="9" height="11" viewBox="0 0 9 11"><path d="M2 1L8 5.5L2 10Z" fill="#222"/></svg>
<svg style="left:735px;top:625px;" width="10" height="7" viewBox="0 0 10 7"><path d="M1 0.5L4.5 3.5L1 6.5ZM5 0.5L8.5 3.5L5 6.5Z" fill="#333"/></svg>
<svg style="left:749px;top:623px;" width="8" height="10" viewBox="0 0 8 10"><path d="M1 3H3L7 0V10L3 7H1Z" fill="#333"/></svg>
<div style="left:759px;top:627px;width:35px;height:3px;background:#6A6460;border-radius:1px"></div>
<svg style="left:789px;top:622px;" width="10" height="11" viewBox="0 0 10 11"><circle cx="5" cy="5.5" r="4" fill="#E8E8E8" stroke="#666"/><circle cx="5" cy="5.5" r="1" fill="#333"/></svg>
<svg style="left:800px;top:622px;" width="12" height="11" viewBox="0 0 12 11"><path d="M1 3.5H3L7 0.5V10.5L3 7.5H1Z" fill="#333"/><path d="M9 3Q11 5.5 9 8" stroke="#555" fill="none"/></svg>
<div style="left:814px;top:620px;width:8px;height:8px;background:#D8D8D8;border:1px solid #666"></div>
<div style="left:814px;top:629px;width:8px;height:8px;background:#D8D8D8;border:1px solid #666"></div>
<div style="left:834px;top:616px;width:190px;height:24px;background:linear-gradient(#1CA0F0,#1290E4 20%,#0E88DC 80%,#0C78C8);border-left:1px solid #0A60B8"></div>
<svg style="left:843px;top:620px;" width="14" height="16" viewBox="0 0 14 16"><rect x="1" y="3" width="8" height="8" fill="#3050A0"/><rect x="4" y="7" width="8" height="7" fill="#D04050"/><rect x="7" y="2" width="6" height="6" fill="#E8EEF8" stroke="#555" stroke-width="0.6"/></svg>
<svg style="left:857px;top:620px;" width="14" height="16" viewBox="0 0 14 16"><rect x="1" y="5" width="8" height="7" fill="#E8EEF8" stroke="#334" stroke-width="1"/><path d="M10 4Q12 6 10 8M12 2Q15 6 12 10" stroke="#DDE" fill="none"/></svg>
<svg style="left:872px;top:620px;" width="14" height="16" viewBox="0 0 14 16"><circle cx="7" cy="8" r="6" fill="#7AAAD8"/><path d="M2 8Q7 2 12 8Q7 14 2 8" fill="#E8F0FA"/><path d="M7 2V14" stroke="#4A7AB8"/></svg>
<svg style="left:885px;top:619px;" width="15" height="17" viewBox="0 0 15 17"><circle cx="7.5" cy="8.5" r="7" fill="#0A0A0A"/><path d="M4 6H10M4 8.5H9M4 11H10" stroke="#fff" stroke-width="1.4"/></svg>
<svg style="left:902px;top:620px;" width="10" height="16" viewBox="0 0 10 16"><path d="M1 2H9V10Q5 14 5 14Q1 10 1 10Z" fill="#F4F4F4" stroke="#999" stroke-width="0.6"/><path d="M2.5 4L5 10L7.5 4" stroke="#D02020" stroke-width="1.8" fill="none"/></svg>
<svg style="left:915px;top:620px;" width="13" height="16" viewBox="0 0 13 16"><rect x="1" y="2" width="11" height="12" fill="#1A3A8A" stroke="#9AB"/><path d="M4 12L6 4L9 12" stroke="#F0C030" stroke-width="1.6" fill="none"/></svg>
<svg style="left:929px;top:620px;" width="12" height="16" viewBox="0 0 12 16"><circle cx="6" cy="8" r="5" fill="#C8C8C8"/><circle cx="6" cy="8" r="2.5" fill="#3A4A5A"/><path d="M8 12L11 15" stroke="#889" stroke-width="1.5"/></svg>
<svg style="left:943px;top:620px;" width="13" height="16" viewBox="0 0 13 16"><path d="M1 5L7 2L12 6L10 12L3 11Z" fill="#40A040" stroke="#1A5A1A" stroke-width="0.6"/><path d="M3 12L12 13" stroke="#DDD" stroke-width="1.5"/></svg>
<svg style="left:958px;top:620px;" width="14" height="16" viewBox="0 0 14 16"><rect x="1" y="2" width="12" height="9" fill="#D8D8D8" stroke="#555"/><path d="M3 14H11M7 11V14" stroke="#CCC" stroke-width="1.5"/></svg>
<div class="t" style="left:976px;top:623px;font-size:8.8px;color:#fff">10:53 PM</div>
</body></html>
